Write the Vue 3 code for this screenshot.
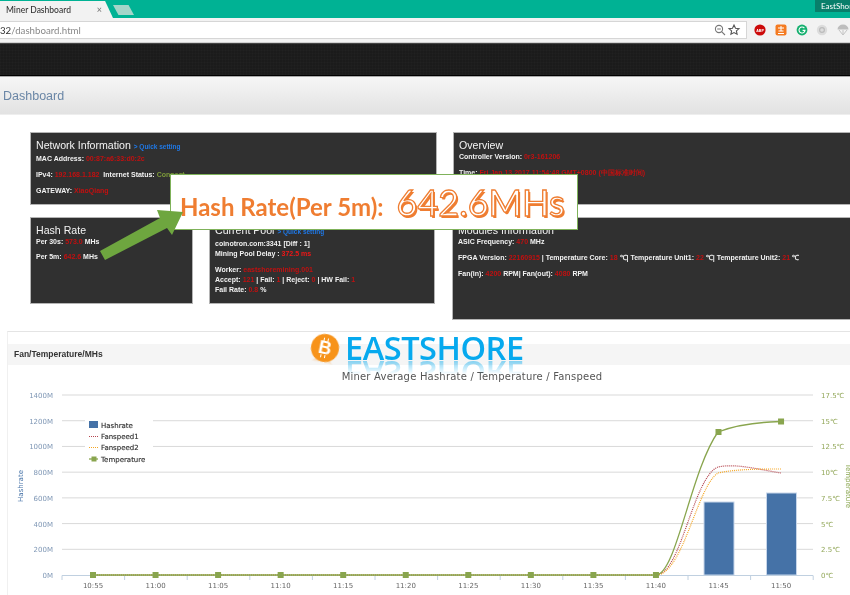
<script setup>
const hashLabels = ['1400M', '1200M', '1000M', '800M', '600M', '400M', '200M', '0M']
const tempLabels = ['17.5℃', '15℃', '12.5℃', '10℃', '7.5℃', '5℃', '2.5℃', '0℃']
const times = ['10:55', '11:00', '11:05', '11:10', '11:15', '11:20', '11:25', '11:30', '11:35', '11:40', '11:45', '11:50']
const gridY = hashLabels.map((_, i) => 395 + i * 25.72)
const pointX = times.map((_, i) => 92 + i * 62.55)
const tickX = Array.from({ length: 13 }, (_, i) => 61 + i * 62.6)
const markers = pointX.map((x, i) => ({ x, y: i === 10 ? 432 : i === 11 ? 421.5 : 575 }))
const bars = [
  { x: 703, y: 502, w: 30, h: 73 },
  { x: 765.5, y: 493, w: 30, h: 82 }
]
</script>

<template>
  <div class="page">
    <div class="tabs">
      <div class="tab"><span>Miner Dashboard</span><i>×</i></div>
      <div class="newtab"></div>
      <div class="user">EastShore</div>
    </div>

    <div class="toolbar">
      <div class="url">
        <span class="host">32</span><span class="path">/dashboard.html</span>
        <svg class="urlicon" width="30" height="14" viewBox="0 0 30 14">
          <circle cx="6" cy="6" r="3.6" fill="none" stroke="#777" stroke-width="1.1" />
          <path d="M8.6 8.6 12 12M4.2 6h3.6" stroke="#777" stroke-width="1.1" fill="none" />
          <path d="M21 2l1.5 3.2 3.5.4-2.6 2.3.7 3.4-3.1-1.7-3.1 1.7.7-3.4-2.6-2.3 3.5-.4z" fill="none" stroke="#555" stroke-width="1.1" />
        </svg>
      </div>
      <div class="exts">
        <svg width="14" height="14" viewBox="0 0 14 14"><circle cx="7" cy="7" r="5.6" fill="#cc0a0a" /><text x="7" y="8.8" class="abp">ABP</text></svg>
        <svg width="14" height="14" viewBox="0 0 14 14"><rect x="1.5" y="1.5" width="11" height="11" rx="2" fill="#f47a20" /><path d="M4 5h6M7 3v5M4 10.5h6M4.5 8h5" stroke="#fff" stroke-width="1" fill="none" /></svg>
        <svg width="14" height="14" viewBox="0 0 14 14"><circle cx="7" cy="7" r="5.4" fill="#15b06f" /><path d="M9.4 5.2A3 3 0 1 0 10 7.4H7.6" stroke="#fff" stroke-width="1.1" fill="none" /></svg>
        <svg width="14" height="14" viewBox="0 0 14 14"><circle cx="7" cy="7" r="5.2" fill="#dcdcdc" /><circle cx="7" cy="7" r="2.4" fill="none" stroke="#bbb" stroke-width="1.2" /></svg>
        <svg width="14" height="14" viewBox="0 0 14 14"><path d="M1.5 6.5A5.5 5 0 0 1 12.5 6.5z" fill="#bdbdbd" /><path d="M3 7l4 5 4-5M7 7v5" stroke="#c4c4c4" fill="none" /></svg>
      </div>
    </div>

    <div class="band"></div>
    <div class="head"><h1>Dashboard</h1></div>

    <main class="main">
      <section class="cards">
        <div class="col-left">
          <article class="card network">
            <h2>Network Information <a>&gt; Quick setting</a></h2>
            <p>MAC Address: <em>00:87:a6:33:d0:2c</em></p>
            <p>IPv4: <em>192.168.1.182</em>&nbsp; Internet Status: <b>Connect</b></p>
            <p>GATEWAY: <em>XiaoQiang</em></p>
          </article>
          <div class="row">
            <article class="card hash">
              <h2>Hash Rate</h2>
              <p class="wide">Per 30s: <em>573.0</em> MHs</p>
              <p>Per 5m: <em>642.6</em> MHs</p>
            </article>
            <article class="card pool">
              <h2>Current Pool <a>&gt; Quick setting</a></h2>
              <p class="tight">coinotron.com:3341 [Diff : 1]</p>
              <p>Mining Pool Delay : <em class="hot">372.5 ms</em></p>
              <p class="tight">Worker: <em>eastshoremining.001</em></p>
              <p class="tight">Accept: <em>121</em> | Fail: <em>1</em> | Reject: <em>0</em> | HW Fail: <em>1</em></p>
              <p class="tight">Fail Rate: <em>0.8</em> %</p>
            </article>
          </div>
        </div>
        <div class="col-right">
          <article class="card overview">
            <h2>Overview</h2>
            <p>Controller Version: <em>0r3-161206</em></p>
            <p>Time: <em>Fri Jan 13 2017 11:54:48 GMT+0800 (中国标准时间)</em></p>
          </article>
          <article class="card modules">
            <h2>Modules Information</h2>
            <p>ASIC Frequency: <em>470</em> MHz</p>
            <p>FPGA Version: <em>22160915</em> | Temperature Core: <em>18</em> ℃| Temperature Unit1: <em>22</em> ℃| Temperature Unit2: <em>21</em> ℃</p>
            <p>Fan(in): <em>4200</em> RPM| Fan(out): <em>4080</em> RPM</p>
          </article>
        </div>
      </section>

      <section class="panel">
        <h3>Fan/Temperature/MHs</h3>
        <svg class="chart" width="843" height="230" viewBox="7 365 843 230">
          <text x="471" y="380" text-anchor="middle" class="title">Miner Average Hashrate / Temperature / Fanspeed</text>

          <line v-for="y in gridY.slice(0, 7)" :key="y" x1="61" x2="812" :y1="y" :y2="y" class="grid" />
          <text v-for="(l, i) in hashLabels" :key="l" x="52" :y="gridY[i] + 3" text-anchor="end" class="ylab">{{ l }}</text>
          <text v-for="(l, i) in tempLabels" :key="l" x="820" :y="gridY[i] + 3" class="rlab">{{ l }}</text>
          <text transform="translate(22 486) rotate(-90)" text-anchor="middle" class="ytitle">Hashrate</text>
          <text transform="translate(845 486) rotate(90)" text-anchor="middle" class="rtitle">Temperature</text>

          <rect v-for="b in bars" :key="b.x" :x="b.x" :y="b.y" :width="b.w" :height="b.h" class="bar" />

          <line x1="61" x2="812" y1="575.5" y2="575.5" class="axis" />
          <line v-for="x in tickX" :key="x" :x1="x" :x2="x" y1="575.5" y2="580" class="axis" />
          <text v-for="(t, i) in times" :key="t" :x="pointX[i]" y="588" text-anchor="middle" class="xlab">{{ t }}</text>

          <path d="M92 575H655C680 575 692 477 717 467C735 463 760 470 780 473" class="fan1" />
          <path d="M92 575H655C682 575 696 486 717 473C735 469 760 469 780 469" class="fan2" />
          <path d="M92 575H655C675 575 690 470 717 432C735 425 760 422 780 421.5" class="temp" />
          <rect v-for="m in markers" :key="m.x" :x="m.x - 3" :y="m.y - 3" width="6" height="6" class="marker" />

          <rect x="84" y="417" width="68" height="47" fill="#fff" />
          <rect x="88" y="421" width="9" height="7" fill="#4572a7" />
          <text x="100" y="428" class="legend">Hashrate</text>
          <line x1="88" x2="97" y1="436.5" y2="436.5" class="fan1" />
          <text x="100" y="439" class="legend">Fanspeed1</text>
          <line x1="88" x2="97" y1="447.5" y2="447.5" class="fan2" />
          <text x="100" y="450" class="legend">Fanspeed2</text>
          <line x1="88" x2="97" y1="459" y2="459" class="temp" />
          <rect x="90.5" y="456.5" width="5" height="5" class="marker" />
          <text x="100" y="462" class="legend">Temperature</text>
        </svg>
      </section>
    </main>

    <div class="brand">
      <span class="coin">B</span>
      <span class="word">EASTSHORE</span>
    </div>

    <div class="callout">
      <span class="lead">Hash Rate(Per 5m):</span>
      <span class="value">642.6MHs</span>
    </div>
    <svg class="arrow" width="100" height="60" viewBox="95 205 100 60">
      <path d="M100 251 160 218 157 210 183 212 172 235 167 228 105 260z" fill="#6ea63f" />
    </svg>
  </div>
</template>

<style>
html, body { margin: 0; background: #fff; overflow: hidden; }
</style>

<style scoped>
.page {
  position: relative;
  width: 850px;
  height: 595px;
  overflow: hidden;
  background: #fff;
  font-family: "Liberation Sans", Arial, sans-serif;
  filter: blur(0.4px);
}
.tabs {
  height: 18px;
  background: #00b294;
  display: flex;
  align-items: flex-end;
  position: relative;
}
.tab {
  width: 113px;
  height: 17px;
  padding-left: 6px;
  box-sizing: border-box;
  background: #f2f2f2;
  clip-path: polygon(0 0, 93% 0, 100% 100%, 0 100%);
  display: flex;
  align-items: center;
  justify-content: space-between;
  padding-right: 11px;
  font: 500 8.5px Lato, sans-serif;
  color: #333;
}
.tab i { font-style: normal; color: #777; font-size: 9px; }
.newtab {
  width: 21px;
  height: 10px;
  margin-bottom: 3px;
  background: #a4d5c9;
  clip-path: polygon(0 0, 74% 0, 100% 100%, 26% 100%);
}
.user {
  position: absolute;
  right: 0;
  top: 0;
  width: 35px;
  height: 12px;
  background: #087f6b;
  color: #fff;
  font: 8px/13px Lato, sans-serif;
  padding-left: 6px;
  box-sizing: border-box;
  white-space: nowrap;
  overflow: hidden;
}
.toolbar {
  height: 25px;
  background: #f2f2f2;
  display: flex;
  align-items: center;
  border-bottom: 1px solid #d0d0d0;
  box-sizing: border-box;
}
.url {
  width: 748px;
  height: 18px;
  box-sizing: border-box;
  background: #fff;
  border: 1px solid #d6d6d6;
  border-left: 0;
  display: flex;
  align-items: center;
  font: 9.7px Lato, sans-serif;
  position: relative;
}
.host { color: #333; }
.path { color: #888; }
.urlicon { margin-left: auto; margin-right: 3px; }
.exts {
  flex: 1;
  display: flex;
  gap: 6.7px;
  padding-left: 6px;
}
.abp { font: bold 3.6px "Liberation Sans", sans-serif; fill: #fff; text-anchor: middle; }
.band {
  height: 33px;
  box-sizing: border-box;
  background-color: #1b1b1b;
  background-image:
    repeating-linear-gradient(0deg, rgba(255, 255, 255, .012) 0 1px, transparent 1px 3px),
    repeating-linear-gradient(90deg, rgba(255, 255, 255, .012) 0 1px, transparent 1px 3px);
  border-bottom: 1px solid #000;
  box-shadow: inset 0 1px #444;
}
.head {
  height: 39px;
  box-sizing: border-box;
  background: linear-gradient(#f6f6f6, #e2e2e2);
  border-top: 1px solid #aaa;
  border-bottom: 1px solid #eee;
  display: flex;
  align-items: center;
  padding-left: 3px;
}
.head h1 {
  margin: 0;
  font-size: 12.5px;
  font-weight: 400;
  color: #6a86a6;
}
.main { padding-top: 17px; }
.cards {
  display: flex;
  align-items: flex-start;
  gap: 16px;
  padding-left: 30px;
}
.col-left { width: 407px; flex: none; display: flex; flex-direction: column; gap: 12px; }
.row { display: flex; gap: 16px; }
.col-right { flex: 1; display: flex; flex-direction: column; gap: 12px; margin-right: -10px; }
.card {
  background: #303030;
  border: 1px solid #b4b4b4;
  box-sizing: border-box;
  padding: 5px 5px 0;
  color: #f2f2f2;
  font-size: 7px;
  line-height: 10px;
  font-weight: 700;
}
.card h2 {
  margin: 0;
  font-size: 10.6px;
  line-height: 14px;
  font-weight: 400;
  color: #f4f4f4;
  white-space: nowrap;
}
.card h2 a { font-size: 6.5px; font-weight: 700; color: #1f78e6; }
.card p { margin: 0 0 6px; white-space: nowrap; }
.card p.tight { margin-bottom: 0; }
.card em { font-style: normal; color: #c01010; }
.card em.hot { color: #f01616; }
.card b { color: #7d9a3a; }
.network, .overview { height: 73px; }
.hash { width: 163px; height: 87px; }
.hash .wide { margin-bottom: 5px; }
.pool { width: 226px; height: 87px; }
.modules { height: 103px; margin-left: -1px; }
.panel {
  margin: 11px 0 0 7px;
  padding-top: 12px;
  border-top: 1px solid #e4e4e4;
  border-left: 1px solid #f0f0f0;
}
.panel h3 {
  margin: 0;
  height: 21px;
  background: #f5f5f5;
  padding-left: 6px;
  font-size: 8.5px;
  line-height: 21px;
  color: #333;
  font-weight: 700;
}
.chart { display: block; }
.title { font: 10px "DejaVu Sans", sans-serif; fill: #555; letter-spacing: .2px; }
.grid { stroke: #d9d9d9; stroke-width: 1; }
.axis { stroke: #c0d0e0; stroke-width: 1; }
.ylab { font: 7px "DejaVu Sans", sans-serif; fill: #7f97b5; }
.rlab { font: 7px "DejaVu Sans", sans-serif; fill: #93a85a; }
.xlab { font: 7px "DejaVu Sans", sans-serif; fill: #666; }
.ytitle { font: 7px "DejaVu Sans", sans-serif; fill: #4572a7; }
.rtitle { font: 7px "DejaVu Sans", sans-serif; fill: #89a54e; }
.legend { font: 500 7px "DejaVu Sans", sans-serif; fill: #333; stroke: #333; stroke-width: .15px; }
.bar { fill: #4572a7; stroke: #c7d6ea; stroke-width: 1; }
.temp { fill: none; stroke: #89a54e; stroke-width: 1.3; }
.fan1 { fill: none; stroke: #b5464f; stroke-width: 1.2; stroke-dasharray: 1 1; }
.fan2 { fill: none; stroke: #f5a623; stroke-width: 1.2; stroke-dasharray: 1 1; }
.marker { fill: #89a54e; }
.brand {
  position: absolute;
  left: 311px;
  top: 334px;
  display: flex;
  align-items: center;
  gap: 6px;
  height: 28px;
}
.coin {
  position: relative;
  width: 28px;
  height: 28px;
  border-radius: 50%;
  background: #f7931a;
  color: #fff;
  font: 700 18px/28px "Liberation Sans", sans-serif;
  text-align: center;
  transform: rotate(12deg);
  -webkit-box-reflect: below -4px linear-gradient(transparent 80%, rgba(255, 255, 255, .5));
}
.coin::before, .coin::after {
  content: "";
  position: absolute;
  left: 11px;
  width: 3px;
  height: 3px;
  border-left: 1.5px solid #fff;
  border-right: 1.5px solid #fff;
}
.coin::before { top: 4px; }
.coin::after { bottom: 4px; }
.word {
  font: 600 32.5px/28px "Open Sans", sans-serif;
  color: #06a9ee;
  letter-spacing: -.45px;
  -webkit-box-reflect: below -3px linear-gradient(transparent 45%, rgba(255, 255, 255, .55));
}
.callout {
  position: absolute;
  left: 170px;
  top: 174px;
  width: 408px;
  height: 56px;
  box-sizing: border-box;
  background: #fff;
  border: 1px solid #7fb25a;
  display: flex;
  align-items: center;
  padding: 8px 0 0 9px;
  white-space: nowrap;
}
.lead { font: 700 24px Lato, sans-serif; color: #ef7d31; }
.value {
  margin-left: 13px;
  font: 400 36px Lato, sans-serif;
  color: #fff;
  -webkit-text-stroke: 1.3px #ef7d31;
  text-shadow: 1.5px 1.5px 0 #ef7d31;
  position: relative;
  top: -4px;
}
.arrow { position: absolute; left: 95px; top: 205px; }
</style>
